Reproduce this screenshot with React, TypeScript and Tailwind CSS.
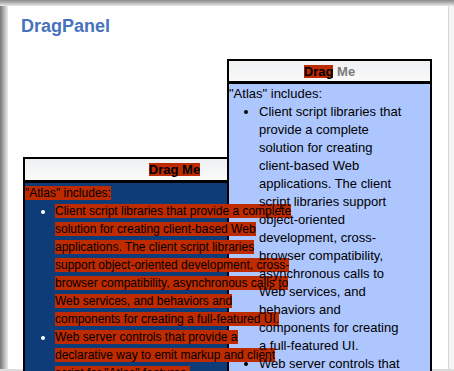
import React from "react";

const items = [
  'Client script libraries that provide a complete solution for creating client-based Web applications. The client script libraries support object-oriented development, cross-browser compatibility, asynchronous calls to Web services, and behaviors and components for creating a full-featured UI.',
  'Web server controls that provide a declarative way to emit markup and client script for "Atlas" features.',
  'Web services, such as ASP.NET profiles, that can add useful server-side features to an "Atlas" application.'
];

const backLines = [
  [
    "Client script libraries that provide a complete",
    "solution for creating client-based Web",
    "applications. The client script libraries",
    "support object-oriented development, cross-",
    "browser compatibility, asynchronous calls to",
    "Web services, and behaviors and",
    "components for creating a full-featured UI."
  ],
  ["Web server controls that provide a", "declarative way to emit markup and client", 'script for "Atlas" features.'],
  ["Web services, such as ASP.NET profiles, that can", "add useful server-side features to an \"Atlas\"", "application."]
];

const hl = "bg-[#bf2b00] text-black";

function clsx(...parts: (string | false | undefined)[]) {
  return parts.filter(Boolean).join(" ");
}

function PanelHeader({ all, height }: { all?: boolean; height: string }) {
  return (
    <div
      className={clsx(
        height,
        "flex items-center justify-center border-b-[3px] border-black bg-gradient-to-b from-[#eef0f1] to-[#fafafa] text-[13px] font-bold"
      )}
    >
      {all ? (
        <span className={clsx(hl, "inline-block leading-[13px]")}>Drag Me</span>
      ) : (
        <span className="leading-[13px]">
          <span className={clsx(hl, "inline-block")}>Drag</span>{" "}
          <span className="text-[#7b7b7b]">Me</span>
        </span>
      )}
    </div>
  );
}

export default function App() {
  return (
    <div className="relative h-[371px] w-[454px] overflow-hidden bg-white font-['Liberation_Sans',Arial,sans-serif] text-black">
      {/* window frame */}
      <div className="flex h-full flex-col">
        <div className="h-[6px] bg-gradient-to-b from-[#8a8a8a] to-[#e9e9e9]" />
        <div className="flex flex-1">
          <div className="w-[8px] bg-gradient-to-r from-[#767676] via-[#b4b4b4] to-[#ececec]" />
          <div className="flex-1 pl-[13px] pt-[11px]">
            <h1 className="text-[18px] font-bold leading-[18px] text-[#4672bd]">DragPanel</h1>
          </div>
          <div className="w-[6px] border-l border-[#d6d6d6] bg-[#f4f4f4]" />
        </div>
        <div className="h-[2px] bg-[#dcdcdc]" />
      </div>

      {/* back panel */}
      <div className="absolute left-[23px] top-[157px] h-[260px] w-[303px] border-2 border-black bg-[#0d3c78]">
        <PanelHeader all height="h-[24px]" />
        <div className="relative z-10 pt-[1px] text-[12px] leading-[18px]">
          <span className={hl}>"Atlas" includes:</span>
          <ul className="list-disc whitespace-nowrap pl-[30px] marker:text-white">
            {backLines.map((lines, i) => (
              <li key={i}>
                {lines.map((line, j) => (
                  <React.Fragment key={j}>
                    <span className={hl}>{line}</span>
                    {j < lines.length - 1 && <br />}
                  </React.Fragment>
                ))}
              </li>
            ))}
          </ul>
        </div>
      </div>

      {/* front panel */}
      <div className="absolute left-[227px] top-[59px] h-[340px] w-[205px] border-2 border-black bg-[#adc6fe]">
        <PanelHeader height="h-[23px]" />
        <div className="relative z-20 pt-[1px] text-[13px] leading-[18px]">
          <span>"Atlas" includes:</span>
          <ul className="list-disc pl-[30px] pr-[24px] marker:text-black">
            {items.map((t) => (
              <li key={t}>{t}</li>
            ))}
          </ul>
        </div>
      </div>
    </div>
  );
}
